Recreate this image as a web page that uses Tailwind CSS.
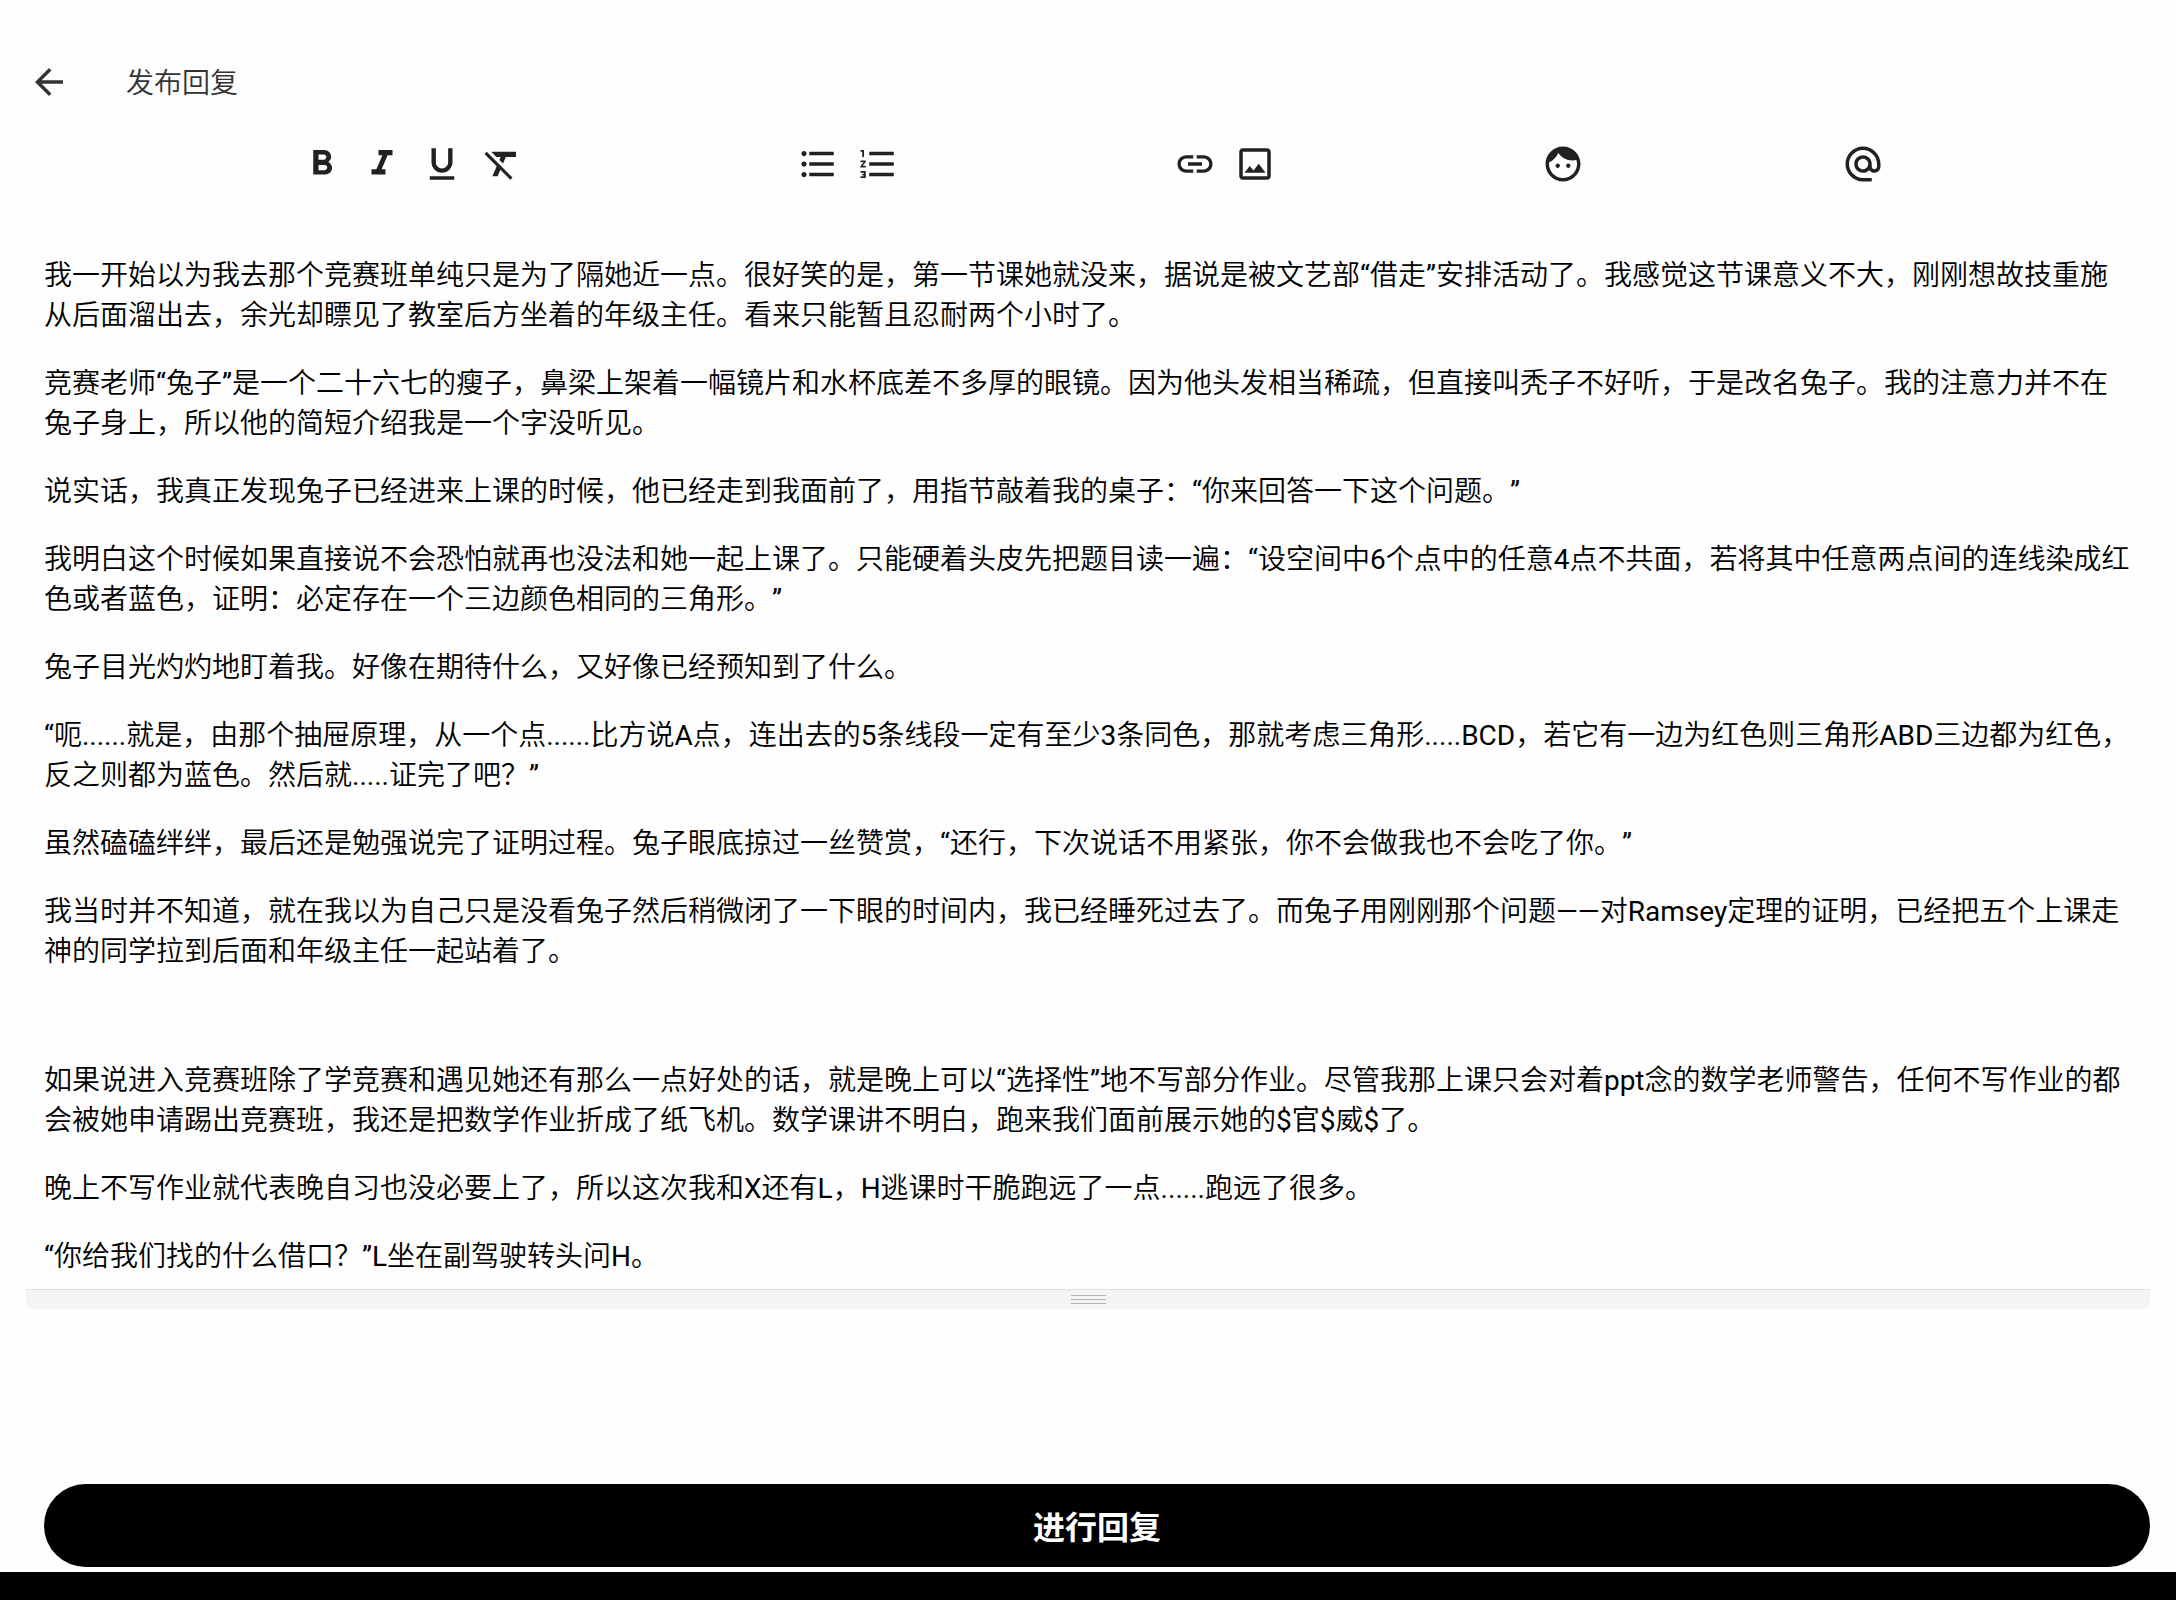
<!DOCTYPE html>
<html lang="zh-CN">
<head>
    <meta charset="UTF-8">
    <meta name="viewport" content="width=device-width, initial-scale=1.0">
    <title>发布回复</title>
    <script src="https://cdn.jsdelivr.net/npm/@tailwindcss/browser@4"></script>
</head>
<body class="flex min-h-screen flex-col bg-[#fefefe] font-[Roboto,'Noto_Sans_CJK_SC_DemiLight','Noto_Sans_CJK_SC',sans-serif] text-[28px] leading-[40px] text-black">

    <!-- App bar -->
    <header class="flex items-center gap-14 bg-[#fdfdfd] px-7 pt-15 pb-[15px]">
        <button type="button" aria-label="返回" class="text-[#333]">
            <svg class="size-[42px]" viewBox="0 0 24 24" fill="currentColor"><path d="M20 11H7.83l5.59-5.59L12 4l-8 8 8 8 1.41-1.41L7.83 13H20v-2z"/></svg>
        </button>
        <h1 class="pt-1 font-[350] text-[#333]">发布回复</h1>
    </header>

    <main class="px-[26px]">
        <!-- Toolbar -->
        <div role="toolbar" aria-label="格式" class="flex justify-between pt-6 pr-[257px] pl-[266px] text-[#212121]">
            <div class="flex pr-4">
                <button type="button" aria-label="粗体" class="flex w-15 justify-center">
                    <svg class="size-[42px]" viewBox="0 0 24 24" fill="currentColor"><path d="M15.6 10.79c.97-.67 1.65-1.77 1.65-2.79 0-2.26-1.75-4-4-4H7v14h7.04c2.09 0 3.71-1.7 3.71-3.79 0-1.52-.86-2.82-2.15-3.42zM10 6.5h3c.83 0 1.5.67 1.5 1.5s-.67 1.5-1.5 1.5h-3v-3zm3.5 9H10v-3h3.5c.83 0 1.5.67 1.5 1.5s-.67 1.5-1.5 1.5z"/></svg>
                </button>
                <button type="button" aria-label="斜体" class="flex w-15 justify-center">
                    <svg class="size-[42px]" viewBox="0 0 24 24" fill="currentColor"><path d="M10 4v3h2.21l-3.42 8H6v3h8v-3h-2.21l3.42-8H18V4z"/></svg>
                </button>
                <button type="button" aria-label="下划线" class="flex w-15 justify-center">
                    <svg class="size-[42px]" viewBox="0 0 24 24" fill="currentColor"><path d="M12 17c3.31 0 6-2.69 6-6V3h-2.5v8c0 1.93-1.57 3.5-3.5 3.5S8.5 12.93 8.5 11V3H6v8c0 3.31 2.69 6 6 6zm-7 2v2h14v-2H5z"/></svg>
                </button>
                <button type="button" aria-label="清除格式" class="flex w-15 justify-center">
                    <svg class="size-[42px]" viewBox="0 0 24 24" fill="currentColor"><path d="M3.27 5L2 6.27l6.97 6.97L6.5 19h3l1.57-3.66L16.73 21 18 19.73 3.55 5.27 3.27 5zM6 5v.18L8.82 8h2.4l-.72 1.68 2.1 2.1L14.21 8H20V5H6z"/></svg>
                </button>
            </div>
            <div class="flex pr-4">
                <button type="button" aria-label="无序列表" class="flex w-15 justify-center">
                    <svg class="size-[42px]" viewBox="0 0 24 24" fill="currentColor"><path d="M4 10.5c-.83 0-1.5.67-1.5 1.5s.67 1.5 1.5 1.5 1.5-.67 1.5-1.5-.67-1.5-1.5-1.5zm0-6c-.83 0-1.5.67-1.5 1.5S3.17 7.5 4 7.5 5.5 6.83 5.5 6 4.83 4.5 4 4.5zm0 12c-.83 0-1.5.68-1.5 1.5s.68 1.5 1.5 1.5 1.5-.68 1.5-1.5-.67-1.5-1.5-1.5zM7 19h14v-2H7v2zm0-6h14v-2H7v2zm0-8v2h14V5H7z"/></svg>
                </button>
                <button type="button" aria-label="有序列表" class="flex w-15 justify-center">
                    <svg class="size-[42px]" viewBox="0 0 24 24" fill="currentColor"><path d="M2 17h2v.5H3v1h1v.5H2v1h3v-4H2v1zm1-9h1V4H2v1h1v3zm-1 3h1.8L2 13.1v.9h3v-1H3.2L5 10.9V10H2v1zm5-6v2h14V5H7zm0 14h14v-2H7v2zm0-6h14v-2H7v2z"/></svg>
                </button>
            </div>
            <div class="flex pr-2">
                <button type="button" aria-label="链接" class="flex w-15 justify-center">
                    <svg class="size-[42px]" viewBox="0 0 24 24" fill="currentColor"><path d="M3.9 12c0-1.71 1.39-3.1 3.1-3.1h4V7H7c-2.76 0-5 2.24-5 5s2.24 5 5 5h4v-1.9H7c-1.71 0-3.1-1.39-3.1-3.1zM8 13h8v-2H8v2zm9-6h-4v1.9h4c1.71 0 3.1 1.39 3.1 3.1s-1.39 3.1-3.1 3.1h-4V17h4c2.76 0 5-2.24 5-5s-2.24-5-5-5z"/></svg>
                </button>
                <button type="button" aria-label="图片" class="flex w-15 justify-center">
                    <svg class="size-[42px]" viewBox="0 0 24 24" fill="currentColor"><path d="M19 5v14H5V5h14m0-2H5c-1.1 0-2 .9-2 2v14c0 1.1.9 2 2 2h14c1.1 0 2-.9 2-2V5c0-1.1-.9-2-2-2zm-4.86 8.86l-3 3.87L9 13.14 6 17h12l-3.86-5.14z"/></svg>
                </button>
            </div>
            <button type="button" aria-label="表情" class="flex w-15 justify-center">
                <svg class="size-[42px]" viewBox="0 0 24 24" fill="currentColor"><path d="M9 11.75c-.69 0-1.25.56-1.25 1.25s.56 1.25 1.25 1.25 1.25-.56 1.25-1.25-.56-1.25-1.25-1.25zm6 0c-.69 0-1.25.56-1.25 1.25s.56 1.25 1.25 1.25 1.25-.56 1.25-1.25-.56-1.25-1.25-1.25zM12 2C6.48 2 2 6.48 2 12s4.48 10 10 10 10-4.48 10-10S17.52 2 12 2zm0 18c-4.41 0-8-3.59-8-8 0-.29.02-.58.05-.86 2.36-1.05 4.23-2.98 5.21-5.37C11.07 8.33 14.05 10 17.42 10c.78 0 1.53-.09 2.25-.26.21.71.33 1.47.33 2.26 0 4.41-3.59 8-8 8z"/></svg>
            </button>
            <button type="button" aria-label="提及" class="flex w-15 justify-center">
                <svg class="size-[42px]" viewBox="0 0 24 24" fill="currentColor"><path d="M12 2C6.48 2 2 6.48 2 12s4.48 10 10 10h5v-2h-5c-4.34 0-8-3.66-8-8s3.66-8 8-8 8 3.66 8 8v1.43c0 .79-.71 1.57-1.5 1.57s-1.5-.78-1.5-1.57V12c0-2.76-2.24-5-5-5s-5 2.24-5 5 2.24 5 5 5c1.38 0 2.64-.56 3.54-1.47.65.89 1.77 1.47 2.96 1.47 1.97 0 3.5-1.6 3.5-3.57V12c0-5.52-4.48-10-10-10zm0 13c-1.66 0-3-1.34-3-3s1.34-3 3-3 3 1.34 3 3-1.34 3-3 3z"/></svg>
            </button>
        </div>

        <!-- Editor -->
        <div role="textbox" aria-multiline="true" aria-label="回复内容" contenteditable="true" spellcheck="false" class="space-y-7 px-[18px] pt-[71px] pb-3 outline-none [text-spacing-trim:space-all]">
            <p>我一开始以为我去那个竞赛班单纯只是为了隔她近一点。很好笑的是，第一节课她就没来，据说是被文艺部“借走”安排活动了。我感觉这节课意义不大，刚刚想故技重施从后面溜出去，余光却瞟见了教室后方坐着的年级主任。看来只能暂且忍耐两个小时了。</p>
            <p>竞赛老师“兔子”是一个二十六七的瘦子，鼻梁上架着一幅镜片和水杯底差不多厚的眼镜。因为他头发相当稀疏，但直接叫秃子不好听，于是改名兔子。我的注意力并不在兔子身上，所以他的简短介绍我是一个字没听见。</p>
            <p>说实话，我真正发现兔子已经进来上课的时候，他已经走到我面前了，用指节敲着我的桌子：“你来回答一下这个问题。”</p>
            <p>我明白这个时候如果直接说不会恐怕就再也没法和她一起上课了。只能硬着头皮先把题目读一遍：“设空间中6个点中的任意4点不共面，若将其中任意两点间的连线染成红色或者蓝色，证明：必定存在一个三边颜色相同的三角形。”</p>
            <p>兔子目光灼灼地盯着我。好像在期待什么，又好像已经预知到了什么。</p>
            <p>“呃......就是，由那个抽屉原理，从一个点......比方说A点，连出去的5条线段一定有至少3条同色，那就考虑三角形.....BCD，若它有一边为红色则三角形ABD三边都为红色，反之则都为蓝色。然后就.....证完了吧？”</p>
            <p>虽然磕磕绊绊，最后还是勉强说完了证明过程。兔子眼底掠过一丝赞赏，“还行，下次说话不用紧张，你不会做我也不会吃了你。”</p>
            <p>我当时并不知道，就在我以为自己只是没看兔子然后稍微闭了一下眼的时间内，我已经睡死过去了。而兔子用刚刚那个问题——对Ramsey定理的证明，已经把五个上课走神的同学拉到后面和年级主任一起站着了。</p>
            <p class="leading-[33px]"><br></p>
            <p>如果说进入竞赛班除了学竞赛和遇见她还有那么一点好处的话，就是晚上可以“选择性”地不写部分作业。尽管我那上课只会对着ppt念的数学老师警告，任何不写作业的都会被她申请踢出竞赛班，我还是把数学作业折成了纸飞机。数学课讲不明白，跑来我们面前展示她的$官$威$了。</p>
            <p>晚上不写作业就代表晚自习也没必要上了，所以这次我和X还有L，H逃课时干脆跑远了一点......跑远了很多。</p>
            <p>“你给我们找的什么借口？”L坐在副驾驶转头问H。</p>
        </div>

        <!-- Resize bar -->
        <div class="flex h-5 flex-col items-center gap-[3px] rounded-b-md border-t border-[#e0e0e0] bg-[#f4f4f4] pt-[5px]">
            <div class="h-px w-[35px] bg-[#b4b4b4]"></div>
            <div class="h-px w-[35px] bg-[#b4b4b4]"></div>
            <div class="h-px w-[35px] bg-[#b4b4b4]"></div>
        </div>
    </main>

    <!-- Submit -->
    <footer class="mt-auto border-b-28 border-black pr-[26px] pb-[5px] pl-11">
        <button type="submit" class="w-full rounded-full bg-black pt-6 pb-[19px] font-[Roboto,'Noto_Sans_CJK_SC',sans-serif] text-[32px] font-bold text-white">进行回复</button>
    </footer>

</body>
</html>
